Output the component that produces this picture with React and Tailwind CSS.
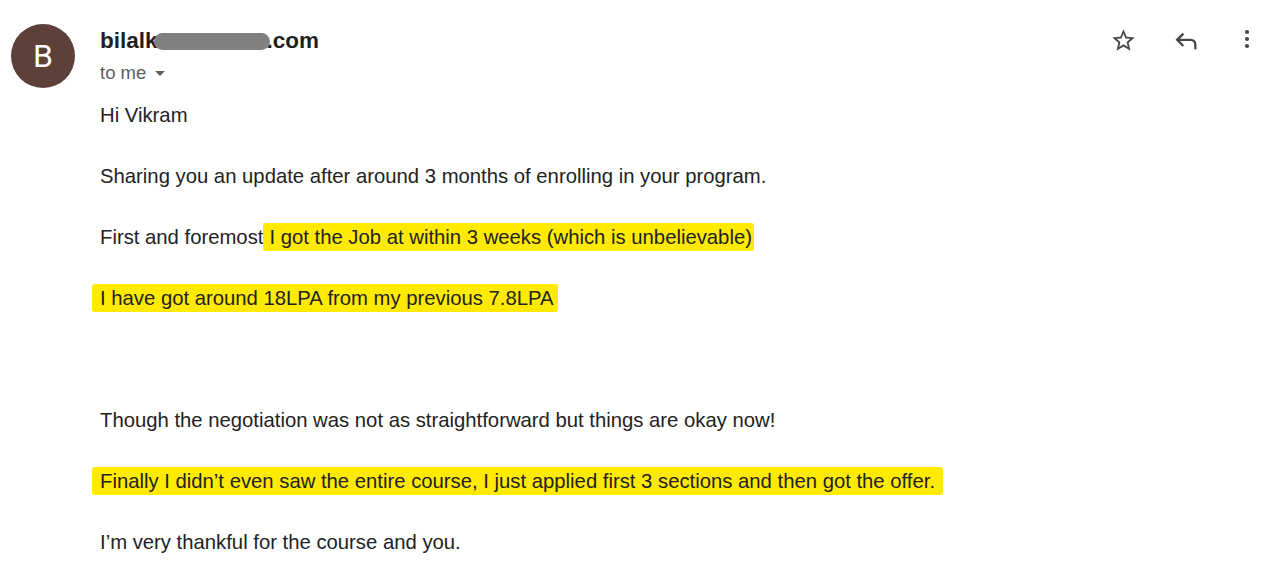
import React from "react";

const Hl = ({ children, className = "" }) => (
  <span className={`bg-[#ffea00] py-[3px] rounded-[3px] ${className}`}>{children}</span>
);

const StarIcon = () => (
  <svg width="27" height="27" viewBox="0 0 24 24" fill="#444746">
    <path d="M22 9.24l-7.19-.62L12 2 9.19 8.63 2 9.24l5.46 4.73L5.82 21 12 17.27 18.18 21l-1.63-7.03L22 9.24zM12 15.4l-3.76 2.27 1-4.28-3.32-2.88 4.38-.38L12 6.1l1.71 4.04 4.38.38-3.32 2.88 1 4.28L12 15.4z" />
  </svg>
);

const ReplyIcon = () => (
  <svg width="28" height="28" viewBox="0 0 24 24" fill="#444746">
    <path d="M19 19v-4q0-1.25-.875-2.125T16 12H6.825l3.6 3.6L9 17l-6-6 6-6 1.425 1.4-3.6 3.6H16q2.075 0 3.538 1.462T21 15v4h-2z" />
  </svg>
);

const MoreIcon = () => (
  <svg width="24" height="24" viewBox="0 0 24 24" fill="#444746">
    <circle cx="12" cy="5" r="2.1" />
    <circle cx="12" cy="12" r="2.1" />
    <circle cx="12" cy="19" r="2.1" />
  </svg>
);

export default function App() {
  return (
    <div className="w-[1273px] h-[568px] bg-white overflow-hidden font-['Liberation_Sans',Arial,sans-serif] text-[#222]">
      <div className="flex pt-[24px] pl-[11px] pr-[14px]">
        <div className="w-[64px] h-[64px] rounded-full bg-[#5d4037] flex items-center justify-center text-white text-[32px] font-['Roboto',sans-serif] shrink-0">
          B
        </div>
        <div className="ml-[25px] flex-1">
          <div className="flex items-center h-[34px] text-[22.5px] font-bold text-[#1f1f1f]">
            <span>bilalk</span>
            <span className="relative inline-block w-[116px] h-[17px] -ml-[4px] -mr-[3px]">
              <span className="absolute inset-0 rounded-full bg-[#808080]" />
            </span>
            <span>.com</span>
          </div>
          <div className="flex items-center mt-[1px] text-[18.5px] text-[#5e5e5e]">
            <span>to me</span>
            <svg className="ml-[8px]" width="12" height="12" viewBox="0 0 12 12" fill="#5e5e5e">
              <path d="M1 4h10l-5 5z" />
            </svg>
          </div>
        </div>
        <div className="flex items-start gap-[35px] mt-[3px]">
          <StarIcon />
          <ReplyIcon />
          <MoreIcon />
        </div>
      </div>

      <div className="pl-[100px] mt-[12px] text-[20.3px] leading-[30px]">
        <p className="mb-[31px]">Hi Vikram</p>
        <p className="mb-[31px]">Sharing you an update after around 3 months of enrolling in your program.</p>
        <p className="mb-[31px]">
          First and foremost<Hl className="pl-[6px] pr-[2px]">I got the Job at within 3 weeks (which is unbelievable)</Hl>
        </p>
        <p className="mb-[31px] -ml-[8px]">
          <Hl className="pl-[8px] pr-[4px]">I have got around 18LPA from my previous 7.8LPA</Hl>
        </p>
        <p className="mb-[31px]">&nbsp;</p>
        <p className="mb-[31px]">Though the negotiation was not as straightforward but things are okay now!</p>
        <p className="mb-[31px] -ml-[8px]">
          <Hl className="pl-[8px] pr-[8px]">Finally I didn’t even saw the entire course, I just applied first 3 sections and then got the offer.</Hl>
        </p>
        <p>I’m very thankful for the course and you.</p>
      </div>
    </div>
  );
}
